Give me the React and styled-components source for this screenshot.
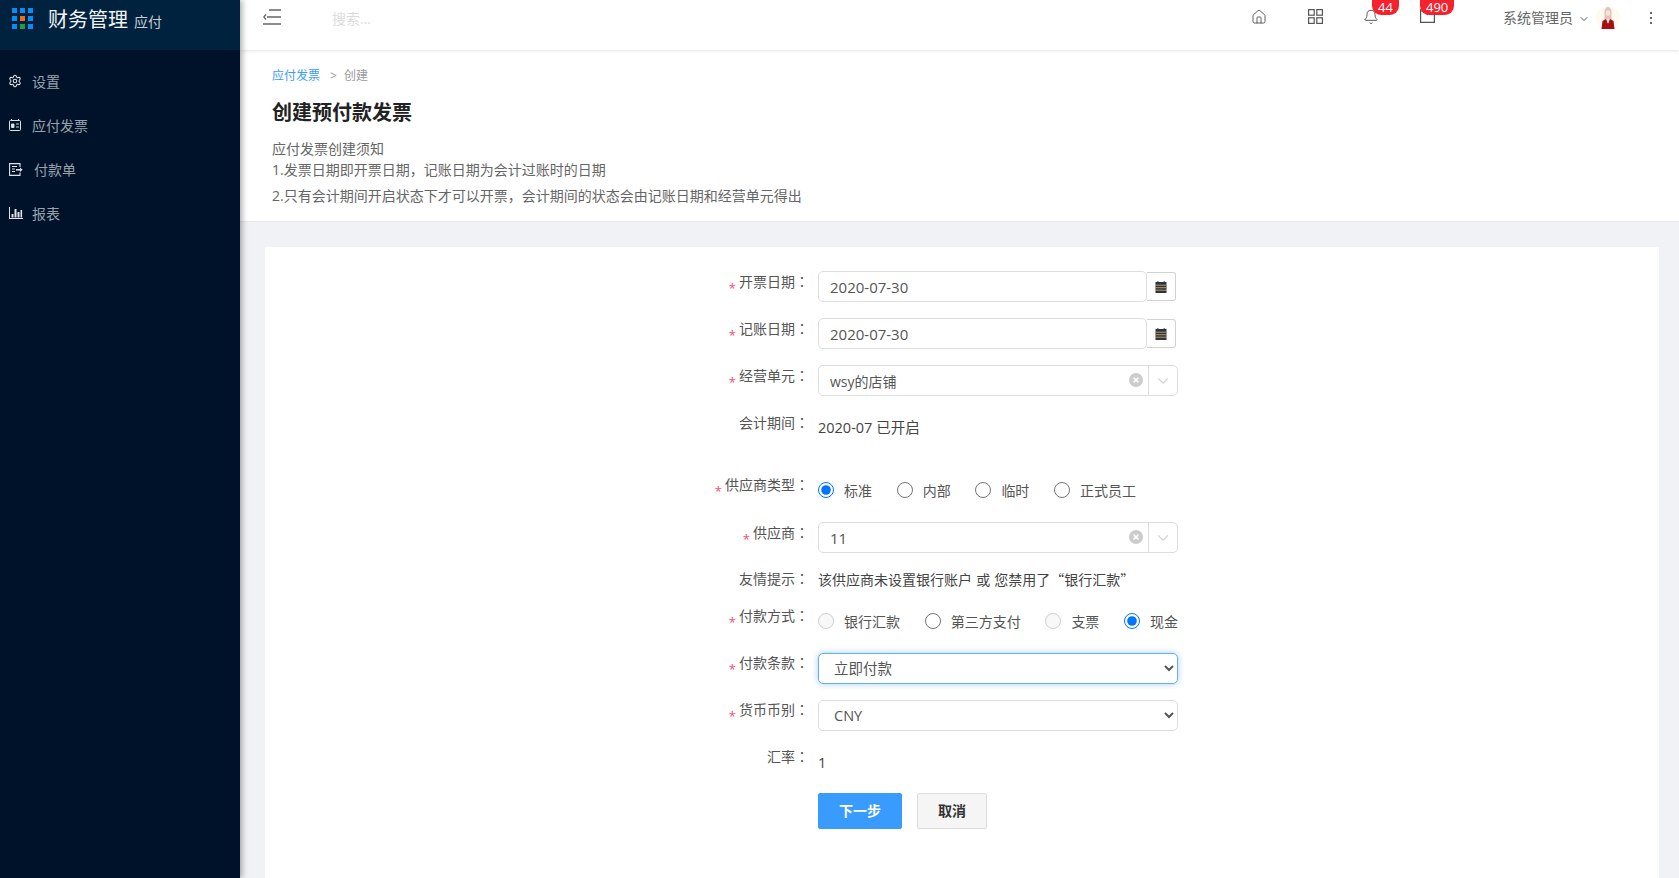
import React from 'react'
import styled, { createGlobalStyle } from 'styled-components'
import { Settings, Home, Bell, ChevronDown } from 'lucide-react'

const fontStack = '"Open Sans", "Noto Sans CJK SC", sans-serif'

const GlobalStyle = createGlobalStyle`
  html, body {
    margin: 0;
    height: 100%;
    background: #f0f2f5;
    font-family: ${fontStack};
    font-size: 14px;
    color: #555;
  }
  * {
    box-sizing: border-box;
  }
`

const Page = styled.div`
  display: grid;
  grid-template-columns: 240px 1fr;
  height: 100vh;
  overflow: hidden;
`

const Sidebar = styled.aside`
  background: #001229;
  box-shadow: 2px 0 6px rgba(0, 0, 0, 0.35);
  position: relative;
  z-index: 2;
`

const Brand = styled.div`
  height: 50px;
  background: #00223f;
  display: flex;
  align-items: flex-start;
  padding: 8px 0 0 12px;
`

const LogoGrid = styled.div`
  display: grid;
  grid-template-columns: repeat(3, 5px);
  grid-auto-rows: 5px;
  gap: 3px;
  margin-right: 15px;
`

const LogoDot = styled.i`
  display: block;
  background: ${(p) => p.$color || '#0a8cf0'};
`

const BrandTitle = styled.span`
  color: #f2f4f6;
  font-size: 20px;
  line-height: 24px;
`

const BrandSub = styled.span`
  color: #c9ced4;
  font-size: 14px;
  margin-left: 6px;
`

const Menu = styled.nav`
  display: flex;
  flex-direction: column;
  padding-top: 9px;
`

const MenuItem = styled.a`
  height: 44px;
  display: flex;
  align-items: center;
  padding-left: ${(p) => p.$left || 9}px;
  color: #98a2ae;
  font-size: 14px;
  gap: ${(p) => p.$gap || 11}px;
  svg {
    flex: none;
    color: #dfe2e6;
  }
`

const Main = styled.main`
  display: flex;
  flex-direction: column;
  min-width: 0;
`

const TopBar = styled.header`
  height: 50px;
  flex: none;
  background: #fff;
  box-shadow: 0 1px 3px rgba(0, 0, 0, 0.1);
  display: flex;
  align-items: center;
  padding-bottom: 13px;
  position: relative;
  z-index: 1;
`

const ToggleButton = styled.button`
  border: 0;
  background: none;
  padding: 0;
  margin: -3px 0 0 23px;
  height: 16px;
  color: #666;
  display: flex;
`

const SearchInput = styled.input`
  border: 0;
  outline: 0;
  width: 200px;
  margin-left: 49px;
  font: inherit;
  font-size: 14px;
  &::placeholder {
    color: #dcdcdc;
  }
`

const TopIcons = styled.div`
  margin-left: auto;
  display: flex;
  align-items: center;
  align-self: stretch;
`

const TopIcon = styled.a`
  width: 56px;
  align-self: stretch;
  display: flex;
  justify-content: center;
  padding-top: ${(p) => p.$top || 9}px;
  color: #555;
  position: relative;
`

const Badge = styled.span`
  position: absolute;
  top: 0;
  left: ${(p) => p.$left}px;
  height: 15px;
  padding: 0 6px;
  border-radius: 0 0 9px 9px;
  background: #f5222d;
  color: #fff;
  font-size: 13px;
  line-height: 15px;
`

const UserName = styled.span`
  margin-left: 48px;
  color: #666;
  font-size: 14px;
  line-height: 20px;
  margin-top: -1px;
`

const UserCaret = styled.span`
  display: flex;
  margin: 0 6px 0 5px;
  color: #555;
`

const Avatar = styled.span`
  display: flex;
  margin-top: -2px;
`

const Kebab = styled.span`
  display: flex;
  flex-direction: column;
  gap: 3px;
  margin: -2px 27px 0 30px;
  i {
    display: block;
    width: 2px;
    height: 2px;
    background: #666;
  }
`

const PageHead = styled.section`
  flex: none;
  height: 172px;
  background: #fff;
  border-bottom: 1px solid #e6e8eb;
  padding: 16px 0 0 32px;
`

const Crumbs = styled.div`
  display: flex;
  font-size: 12px;
  line-height: 20px;
  color: #999;
`

const CrumbLink = styled.a`
  color: #3a9bff;
`

const CrumbSep = styled.span`
  margin: 0 7px 0 10px;
`

const Title = styled.h1`
  margin: 13px 0 11px;
  font-size: 20px;
  line-height: 28px;
  font-weight: 700;
  color: #222;
`

const Note = styled.p`
  margin: 0 0 ${(p) => p.$after || 0}px;
  line-height: 21px;
  color: #666;
`

const Content = styled.div`
  flex: 1;
  display: flex;
  padding: 25px 20px 0 25px;
  min-height: 0;
`

const Card = styled.div`
  flex: 1;
  background: #fff;
  padding-top: 24px;
`

const Row = styled.div`
  display: grid;
  grid-template-columns: 544px 360px;
  column-gap: 9px;
  min-height: 31px;
  margin-bottom: ${(p) => p.$after ?? 16}px;
`

const Label = styled.label`
  text-align: right;
  line-height: 21px;
  color: #555;
  margin-top: ${(p) => (p.$raised ? -1 : 0)}px;
`

const Star = styled.span`
  color: #f0506e;
  font-size: 13px;
  margin-right: 3px;
  position: relative;
  top: 6px;
`

const Colon = styled.span`
  font-family: "Noto Sans CJK TC", sans-serif;
`

const DateGroup = styled.div`
  display: flex;
  align-items: center;
`

const TextInput = styled.input`
  flex: 1;
  min-width: 0;
  height: 31px;
  border: 1px solid #ddd;
  border-radius: 5px;
  padding: 0 11px;
  font: inherit;
  font-size: 15px;
  color: #555;
  outline: 0;
`

const CalendarAddon = styled.span`
  flex: none;
  width: 29px;
  height: 29px;
  margin-right: 2px;
  border: 1px solid #d2d2d2;
  border-left: 0;
  border-radius: 0 3px 3px 0;
  display: flex;
  align-items: center;
  justify-content: center;
`

const Combo = styled.div`
  height: 31px;
  border: 1px solid #ddd;
  border-radius: 5px;
  display: flex;
  align-items: center;
`

const ComboValue = styled.span`
  flex: 1;
  padding-left: 11px;
  color: #555;
  font-size: ${(p) => p.$size || 14}px;
  margin-top: 1px;
`

const ComboClear = styled.span`
  display: flex;
  margin: -1px 5px 0 0;
`

const ComboArrow = styled.span`
  width: 29px;
  height: 100%;
  border-left: 1px solid #ddd;
  display: flex;
  align-items: center;
  justify-content: center;
  color: #d4d4d4;
`

const Value = styled.div`
  color: #444;
  line-height: 31px;
  font-size: 14.5px;
`

const Hint = styled.div`
  color: #444;
  line-height: 21px;
  word-spacing: 1px;
  font-family: "Noto Sans CJK SC", sans-serif;
`

const RadioGroup = styled.div`
  display: flex;
  align-items: center;
  gap: 24.7px;
  height: 29px;
`

const RadioLabel = styled.label`
  display: flex;
  align-items: center;
  gap: 10px;
  color: #555;
  white-space: nowrap;
`

const Radio = styled.input`
  margin: 0;
  width: 16px;
  height: 16px;
`

const NativeSelect = styled.select`
  width: 100%;
  height: 31px;
  background: #fff;
  border: 1px solid ${(p) => (p.$focused ? '#66afe9' : '#ddd')};
  border-radius: 5px;
  padding: 0 11px;
  font: inherit;
  font-size: 14.5px;
  color: #555;
  outline: 0;
  box-shadow: ${(p) => (p.$focused ? '0 0 6px rgba(102, 175, 233, 0.6)' : 'none')};
`

const Actions = styled.div`
  display: flex;
  gap: 15px;
`

const Button = styled.button`
  height: 36px;
  width: ${(p) => p.$width}px;
  border: 1px solid ${(p) => (p.$primary ? '#3a9bff' : '#ddd')};
  border-radius: 2px;
  background: ${(p) => (p.$primary ? '#3a9bff' : '#f5f5f5')};
  color: ${(p) => (p.$primary ? '#fff' : '#333')};
  font: inherit;
  font-size: 14px;
  font-weight: 700;
  padding: 0 0 2px;
`

const ToggleIcon = () => (
  <svg width="18" height="16" viewBox="0 0 18 16" fill="none" stroke="currentColor" strokeWidth="1.3">
    <path d="M6 1h12M4 8h14M0 15h18" />
    <path d="M3 5.5 0.8 8 3 10.5" />
  </svg>
)

const GridIcon = () => (
  <svg width="15" height="15" viewBox="0 0 15 15" fill="none" stroke="currentColor" strokeWidth="1.2">
    <rect x="0.6" y="0.6" width="5.6" height="5.6" />
    <rect x="8.8" y="0.6" width="5.6" height="5.6" />
    <rect x="0.6" y="8.8" width="5.6" height="5.6" />
    <rect x="8.8" y="8.8" width="5.6" height="5.6" />
  </svg>
)

const BoxIcon = () => (
  <svg width="15" height="16" viewBox="0 0 15 16" fill="none" stroke="currentColor" strokeWidth="1.2">
    <path d="M0.6 1v13.4h13.8V1" />
    <path d="M0.6 3h3l4 3.5 4-3.5h3" />
  </svg>
)

const CardIcon = () => (
  <svg width="12" height="12" viewBox="0 0 12 12" fill="none" stroke="currentColor" strokeWidth="1">
    <rect x="0.5" y="1.5" width="11" height="10" rx="1" />
    <path d="M2.5 0v2M9.5 0v2" />
    <path d="M2.5 5h2.5v3.5h-2.5zM7 5h3M7 8h3" fill="currentColor" strokeWidth="0.9" />
  </svg>
)

const ExportIcon = () => (
  <svg width="14" height="13" viewBox="0 0 14 13" fill="none" stroke="currentColor" strokeWidth="1.1">
    <path d="M11 4V0.6H0.6v11.8H11V9.5" />
    <path d="M3 3.5h5M3 6h3M3 8.5h3" />
    <path d="M7 6.8h4.5" strokeWidth="1.6" />
    <path d="M11 4.6 13.6 6.8 11 9z" fill="currentColor" stroke="none" />
  </svg>
)

const ChartIcon = () => (
  <svg width="14" height="12" viewBox="0 0 14 12" fill="currentColor">
    <path d="M0 0h1v11h13v1H0z" />
    <path d="M2.5 7h2v3.5h-2zM5.5 2h2v8.5h-2zM8.5 5h2v5.5h-2zM11.5 3h1.6v7.5h-1.6z" />
  </svg>
)

const CalendarIcon = () => (
  <svg width="12" height="12" viewBox="0 0 12 12" fill="#333">
    <rect x="2" y="0" width="1.6" height="2" fill="#4a9fe0" />
    <rect x="8.4" y="0" width="1.6" height="2" fill="#4a9fe0" />
    <rect x="0.5" y="1" width="11" height="11" />
    <path d="M0.5 4.2h11M0.5 6.7h11M0.5 9.2h11" stroke="#cbb58e" strokeWidth="0.8" />
  </svg>
)

const ClearIcon = () => (
  <svg width="14" height="14" viewBox="0 0 14 14">
    <circle cx="7" cy="7" r="7" fill="#cccccc" />
    <path d="M4.6 4.6 9.4 9.4M9.4 4.6 4.6 9.4" stroke="#fff" strokeWidth="1.8" />
  </svg>
)

const AvatarIcon = () => (
  <svg width="24" height="24" viewBox="0 0 24 24">
    <circle cx="12" cy="12" r="12" fill="#fffaf0" />
    <path d="M8.5 14V6c0-3 1.5-5 3.5-5s3.5 2 3.5 5v8z" fill="#e3c3bb" />
    <ellipse cx="12" cy="7" rx="2" ry="3" fill="#f5e4dd" />
    <path d="M5.5 23 6.5 15l3.5-2 2 4 2-4 3.5 2 1 8z" fill="#a80f12" />
    <path d="M10.5 13h3L12 18z" fill="#f4e6e0" />
  </svg>
)

const logoColors = [null, null, null, null, '#f0701a', null, null, '#1f9d45', null]

const menuItems = [
  { label: '设置', icon: <Settings size={14} strokeWidth={1.8} />, left: 8, gap: 10 },
  { label: '应付发票', icon: <CardIcon /> },
  { label: '付款单', icon: <ExportIcon />, gap: 11 },
  { label: '报表', icon: <ChartIcon />, gap: 9 },
]

const FieldLabel = ({ required, raised, children }) => (
  <Label $raised={raised}>
    {required && <Star>*</Star>}
    {children}
    <Colon>：</Colon>
  </Label>
)

const App = () => (
  <Page>
    <GlobalStyle />
    <Sidebar>
      <Brand>
        <LogoGrid>
          {logoColors.map((color, i) => (
            <LogoDot key={i} $color={color} />
          ))}
        </LogoGrid>
        <BrandTitle>
          财务管理<BrandSub>应付</BrandSub>
        </BrandTitle>
      </Brand>
      <Menu>
        {menuItems.map((item) => (
          <MenuItem key={item.label} $gap={item.gap} $left={item.left}>
            {item.icon}
            {item.label}
          </MenuItem>
        ))}
      </Menu>
    </Sidebar>
    <Main>
      <TopBar>
        <ToggleButton>
          <ToggleIcon />
        </ToggleButton>
        <SearchInput placeholder="搜索..." />
        <TopIcons>
          <TopIcon>
            <Home size={16} strokeWidth={1.4} />
          </TopIcon>
          <TopIcon>
            <GridIcon />
          </TopIcon>
          <TopIcon>
            <Bell size={16} strokeWidth={1.5} />
            <Badge $left={29}>44</Badge>
          </TopIcon>
          <TopIcon $top={8}>
            <BoxIcon />
            <Badge $left={21}>490</Badge>
          </TopIcon>
          <UserName>系统管理员</UserName>
          <UserCaret>
            <ChevronDown size={12} />
          </UserCaret>
          <Avatar>
            <AvatarIcon />
          </Avatar>
          <Kebab>
            <i />
            <i />
            <i />
          </Kebab>
        </TopIcons>
      </TopBar>
      <PageHead>
        <Crumbs>
          <CrumbLink>应付发票</CrumbLink>
          <CrumbSep>&gt;</CrumbSep>
          <span>创建</span>
        </Crumbs>
        <Title>创建预付款发票</Title>
        <Note>应付发票创建须知</Note>
        <Note $after={5}>1.发票日期即开票日期，记账日期为会计过账时的日期</Note>
        <Note>2.只有会计期间开启状态下才可以开票，会计期间的状态会由记账日期和经营单元得出</Note>
      </PageHead>
      <Content>
        <Card>
          <Row>
            <FieldLabel required>开票日期</FieldLabel>
            <DateGroup>
              <TextInput readOnly value="2020-07-30" />
              <CalendarAddon>
                <CalendarIcon />
              </CalendarAddon>
            </DateGroup>
          </Row>
          <Row>
            <FieldLabel required>记账日期</FieldLabel>
            <DateGroup>
              <TextInput readOnly value="2020-07-30" />
              <CalendarAddon>
                <CalendarIcon />
              </CalendarAddon>
            </DateGroup>
          </Row>
          <Row>
            <FieldLabel required>经营单元</FieldLabel>
            <Combo>
              <ComboValue>wsy的店铺</ComboValue>
              <ComboClear>
                <ClearIcon />
              </ComboClear>
              <ComboArrow>
                <ChevronDown size={18} strokeWidth={1.5} />
              </ComboArrow>
            </Combo>
          </Row>
          <Row $after={32}>
            <FieldLabel>会计期间</FieldLabel>
            <Value>2020-07 已开启</Value>
          </Row>
          <Row>
            <FieldLabel required raised>供应商类型</FieldLabel>
            <RadioGroup>
              <RadioLabel><Radio type="radio" name="vendorType" defaultChecked />标准</RadioLabel>
              <RadioLabel><Radio type="radio" name="vendorType" />内部</RadioLabel>
              <RadioLabel><Radio type="radio" name="vendorType" />临时</RadioLabel>
              <RadioLabel><Radio type="radio" name="vendorType" />正式员工</RadioLabel>
            </RadioGroup>
          </Row>
          <Row>
            <FieldLabel required>供应商</FieldLabel>
            <Combo>
              <ComboValue $size={15}>11</ComboValue>
              <ComboClear>
                <ClearIcon />
              </ComboClear>
              <ComboArrow>
                <ChevronDown size={18} strokeWidth={1.5} />
              </ComboArrow>
            </Combo>
          </Row>
          <Row $after={6}>
            <FieldLabel raised>友情提示</FieldLabel>
            <Hint>该供应商未设置银行账户 或 您禁用了“银行汇款”</Hint>
          </Row>
          <Row>
            <FieldLabel required raised>付款方式</FieldLabel>
            <RadioGroup>
              <RadioLabel><Radio type="radio" name="payMethod" disabled />银行汇款</RadioLabel>
              <RadioLabel><Radio type="radio" name="payMethod" />第三方支付</RadioLabel>
              <RadioLabel><Radio type="radio" name="payMethod" disabled />支票</RadioLabel>
              <RadioLabel><Radio type="radio" name="payMethod" defaultChecked />现金</RadioLabel>
            </RadioGroup>
          </Row>
          <Row>
            <FieldLabel required raised>付款条款</FieldLabel>
            <NativeSelect $focused defaultValue="now">
              <option value="now">立即付款</option>
            </NativeSelect>
          </Row>
          <Row>
            <FieldLabel required raised>货币币别</FieldLabel>
            <NativeSelect defaultValue="CNY">
              <option value="CNY">CNY</option>
            </NativeSelect>
          </Row>
          <Row $after={15}>
            <FieldLabel raised>汇率</FieldLabel>
            <Value>1</Value>
          </Row>
          <Row>
            <span />
            <Actions>
              <Button $primary $width={84}>下一步</Button>
              <Button $width={70}>取消</Button>
            </Actions>
          </Row>
        </Card>
      </Content>
    </Main>
  </Page>
)

export default App
